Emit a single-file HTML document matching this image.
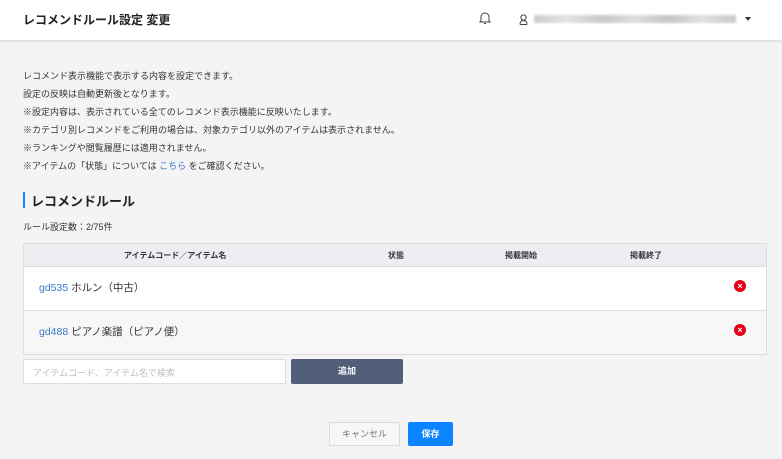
<!DOCTYPE html><html><head><meta charset="utf-8"><style>
*{margin:0;padding:0;box-sizing:border-box}
body{width:782px;height:459px;background:#f4f4f4;font-family:"Liberation Sans","Noto Sans CJK JP",sans-serif;color:#333;position:relative;overflow:hidden}
.hd{position:absolute;left:0;top:0;width:782px;height:40px;background:#fff;box-shadow:0 1px 3px rgba(0,0,0,.15)}
.a{position:absolute;white-space:nowrap}
.t{font-size:9px;left:23px;color:#333}
.tb{position:absolute;left:23px;top:243px;width:744px;height:112px;border:1px solid #ddd;background:#fff}
.th{position:absolute;left:0;top:0;width:742px;height:23px;background:#eceef2;border-bottom:1px solid #ddd;font-size:8px;font-weight:bold}
.r{position:absolute;left:0;width:742px;height:44px;font-size:10.5px}
.x{position:absolute;left:710px;width:12px;height:12px;border-radius:50%;background:#e60012;color:#fff;font-size:9px;font-weight:bold;line-height:12px;text-align:center}
</style></head><body>
<div class="hd">
<div class="a" style="left:23px;top:11px;font-size:12px;font-weight:bold;color:#222">レコメンドルール設定 変更</div>
<svg class="a" style="left:479px;top:11px" width="12" height="14" viewBox="0 0 12 14"><path d="M2 10V6a4 4 0 0 1 8 0v4l1 1H1z M5 12.5h2" fill="none" stroke="#444" stroke-width="1"/></svg>
<svg class="a" style="left:519px;top:14px" width="9" height="11" viewBox="0 0 9 11"><circle cx="4.5" cy="3.5" r="2.6" fill="none" stroke="#444"/><path d="M1 10.5h7M1 10.5c0-3 1.5-4 3.5-4s3.5 1 3.5 4" fill="none" stroke="#444"/></svg>
<div class="a" style="left:534px;top:15px;width:202px;height:8px;background:linear-gradient(90deg,#ccc,#e4e4e4,#c8c8c8,#ddd,#c6c6c6,#e0e0e0,#cacaca);filter:blur(1px)"></div>
<div class="a" style="left:745px;top:17px;width:0;height:0;border-left:3.5px solid transparent;border-right:3.5px solid transparent;border-top:4px solid #333"></div>
</div>
<div class="a t" style="top:69px">レコメンド表示機能で表示する内容を設定できます。</div>
<div class="a t" style="top:87px">設定の反映は自動更新後となります。</div>
<div class="a t" style="top:105px">※設定内容は、表示されている全てのレコメンド表示機能に反映いたします。</div>
<div class="a t" style="top:123px">※カテゴリ別レコメンドをご利用の場合は、対象カテゴリ以外のアイテムは表示されません。</div>
<div class="a t" style="top:141px">※ランキングや閲覧履歴には適用されません。</div>
<div class="a t" style="top:159px">※アイテムの「状態」については <span style="color:#3a78c8">こちら</span> をご確認ください。</div>
<div class="a" style="left:23px;top:192px;width:2px;height:16px;background:#0a84ff"></div>
<div class="a" style="left:31px;top:191px;font-size:13px;font-weight:bold;color:#222">レコメンドルール</div>
<div class="a t" style="top:220px">ルール設定数：2/75件</div>
<div class="tb">
<div class="th"><span class="a" style="left:100px;top:6px">アイテムコード／アイテム名</span><span class="a" style="left:364px;top:6px">状態</span><span class="a" style="left:481px;top:6px">掲載開始</span><span class="a" style="left:606px;top:6px">掲載終了</span></div>
<div class="r" style="top:23px;border-bottom:1px solid #ddd"><span class="a" style="left:15px;top:13px"><span style="color:#3a78c8">gd535</span> ホルン（中古）</span><div class="x" style="top:13px">×</div></div>
<div class="r" style="top:67px;height:43px;background:#f7f7f7"><span class="a" style="left:15px;top:13px"><span style="color:#3a78c8">gd488</span> ピアノ楽譜（ピアノ便）</span><div class="x" style="top:13px">×</div></div>
</div>
<div class="a" style="left:23px;top:359px;width:263px;height:25px;background:#fff;border:1px solid #ddd;font-size:9px;color:#bbb;padding:6px 9px">アイテムコード、アイテム名で検索</div>
<div class="a" style="left:291px;top:359px;width:112px;height:25px;background:#525f78;border-radius:2px;color:#fff;font-size:9px;font-weight:bold;text-align:center;line-height:25px">追加</div>
<div class="a" style="left:329px;top:422px;width:71px;height:24px;background:#f7f7f7;border:1px solid #ddd;color:#777;font-size:9px;text-align:center;line-height:22px">キャンセル</div>
<div class="a" style="left:408px;top:422px;width:45px;height:24px;background:#0a84ff;border-radius:2px;color:#fff;font-size:9px;font-weight:bold;text-align:center;line-height:24px">保存</div>
</body></html>
